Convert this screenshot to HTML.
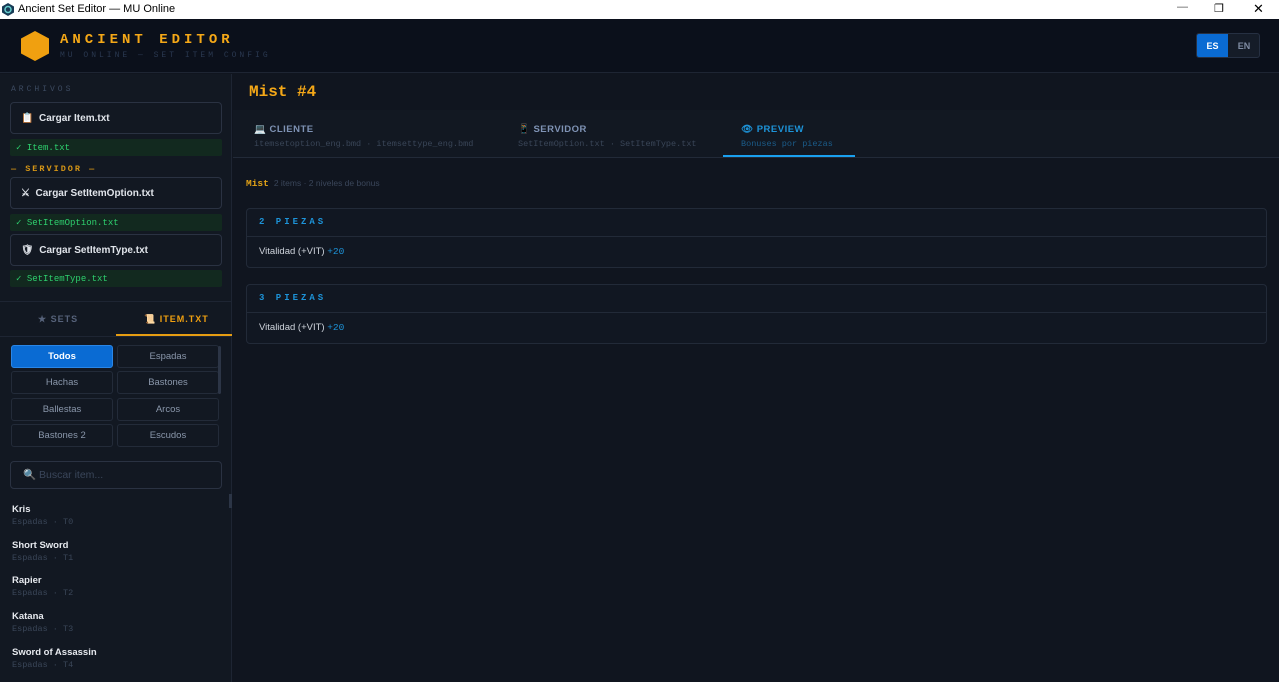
<!DOCTYPE html><html><head><meta charset="utf-8"><style>
*{box-sizing:border-box;margin:0;padding:0}
body{width:1279px;height:682px;overflow:hidden;background:#10151f;font-family:"Liberation Sans",sans-serif;color:#d6dbe4;position:relative}
.mono{font-family:"Liberation Mono",monospace}
.abs{position:absolute}
#tb{left:0;top:0;width:1279px;height:19px;background:#fff;color:#000;font-size:11px}
#hd{left:0;top:19px;width:1279px;height:54px;background:#0b101b;border-bottom:1px solid #1e2533}
#sb{left:0;top:74px;width:232px;height:608px;background:#121822;border-right:1px solid #1e2533}
.btn{position:absolute;left:10px;width:212px;height:32px;border:1px solid #2a3242;border-radius:4px;background:#121822;font-size:10px;font-weight:bold;color:#e0e4ea;padding-left:10px;line-height:32px}
.ok{position:absolute;left:10px;width:212px;height:17px;background:#12291f;color:#2ed06e;font-size:9px;line-height:18px;padding-left:6px;border-radius:2px}
.cat{position:absolute;width:102px;height:23px;border:1px solid #232b39;border-radius:3px;font-size:9.5px;color:#8a97ab;text-align:center;line-height:21px;background:#121822}
.it{position:absolute;left:12px;font-size:9.5px;font-weight:bold;color:#e6e9ee}
.it span{display:block;font-weight:normal;color:#3a4658;font-size:8.5px;margin-top:2px;font-family:"Liberation Mono",monospace}
.card{position:absolute;left:246px;width:1021px;height:60px;border:1px solid #222a38;border-radius:4px;background:#111722}
.card .h{height:28px;border-bottom:1px solid #222a38;color:#1d93d8;font-size:9px;font-weight:bold;letter-spacing:3px;padding-left:12px;line-height:27px;font-family:"Liberation Mono",monospace}
.card .b{font-size:9.5px;padding-left:12px;line-height:30px;color:#cfd4dc}
.card .b b{color:#1d93d8;font-weight:normal;font-family:"Liberation Mono",monospace}
.tab{position:absolute;top:124px;font-size:9.5px;font-weight:bold;letter-spacing:.5px}
.tab span{display:block;font-weight:normal;font-size:8.5px;margin-top:4px;font-family:"Liberation Mono",monospace;letter-spacing:0}
</style></head><body>
<div class="abs" id="tb"><svg class="abs" style="left:2px;top:3px" width="12" height="13" viewBox="0 0 12 13"><polygon points="6,0 12,3.5 12,9.5 6,13 0,9.5 0,3.5" fill="#163a55"/><circle cx="6" cy="6.5" r="3" fill="none" stroke="#6cc" stroke-width="1.5"/></svg><span class="abs" style="left:18px;top:3px">Ancient Set Editor — MU Online</span>
<span class="abs" style="left:1177px;top:1px;color:#555">—</span><span class="abs" style="left:1214px;top:2px;font-size:11px">❐</span><span class="abs" style="left:1253px;top:1px;font-size:13px">✕</span></div>
<div class="abs" id="hd">
<svg class="abs" style="left:19px;top:11px" width="32" height="32" viewBox="0 0 32 32"><polygon points="16,1 30,8.5 30,23.5 16,31 2,23.5 2,8.5" fill="#f0a010"/></svg>
<div class="abs mono" style="left:60px;top:13px;color:#f5a817;font-size:14px;font-weight:bold;letter-spacing:4px">ANCIENT EDITOR</div>
<div class="abs mono" style="left:60px;top:32px;color:#2a3850;font-size:8px;letter-spacing:3px">MU ONLINE — SET ITEM CONFIG</div>
<div class="abs" style="left:1196px;top:14px;width:64px;height:25px;border:1px solid #263042;border-radius:3px;background:#151c28;overflow:hidden;font-size:9px;font-weight:bold"><div class="abs" style="left:0;top:0;width:31px;height:25px;background:#0a6bd3;color:#fff;text-align:center;line-height:24px">ES</div><div class="abs" style="left:31px;top:0;width:32px;color:#7f8ca3;text-align:center;line-height:24px">EN</div></div>
</div>
<div class="abs" id="sb">
<div class="abs mono" style="left:11px;top:11px;font-size:8px;color:#3c4a60;letter-spacing:3px">ARCHIVOS</div>
<div class="btn" style="top:28px">📋 &nbsp;Cargar Item.txt</div>
<div class="ok mono" style="top:65px">✓ Item.txt</div>
<div class="abs mono" style="left:11px;top:90px;font-size:8.5px;color:#d49516;letter-spacing:2px;font-weight:bold">— SERVIDOR —</div>
<div class="btn" style="top:103px">⚔ &nbsp;Cargar SetItemOption.txt</div>
<div class="ok mono" style="top:140px">✓ SetItemOption.txt</div>
<div class="btn" style="top:160px">🛡 &nbsp;Cargar SetItemType.txt</div>
<div class="ok mono" style="top:196px">✓ SetItemType.txt</div>
<div class="abs" style="left:0;top:227px;width:232px;height:1px;background:#1e2533"></div>
<div class="abs" style="left:38px;top:240px;font-size:9px;font-weight:bold;color:#56627a;letter-spacing:1px">★ SETS</div>
<div class="abs" style="left:144px;top:240px;font-size:9px;font-weight:bold;color:#f0a010;letter-spacing:1px">📜 ITEM.TXT</div>
<div class="abs" style="left:116px;top:260px;width:116px;height:2px;background:#e59c12"></div>
<div class="abs" style="left:0;top:262px;width:232px;height:1px;background:#1e2533"></div>
<div class="cat" style="left:11px;top:271px;background:#0a6bd3;border-color:#2a86e6;color:#fff;font-weight:bold">Todos</div>
<div class="cat" style="left:117px;top:271px">Espadas</div>
<div class="cat" style="left:11px;top:297px">Hachas</div><div class="cat" style="left:117px;top:297px">Bastones</div>
<div class="cat" style="left:11px;top:324px">Ballestas</div><div class="cat" style="left:117px;top:324px">Arcos</div>
<div class="cat" style="left:11px;top:350px">Bastones 2</div><div class="cat" style="left:117px;top:350px">Escudos</div>
<div class="abs" style="left:218px;top:272px;width:3px;height:48px;background:#2c3546;border-radius:2px"></div>
<div class="abs" style="left:10px;top:387px;width:212px;height:28px;border:1px solid #2a3242;border-radius:4px;font-size:10.5px;color:#3a465a;line-height:26px;padding-left:12px">🔍 Buscar item...</div>
<div class="abs" style="left:229px;top:420px;width:3px;height:14px;background:#2c3546"></div>
<div class="it" style="top:430px">Kris<span>Espadas · T0</span></div>
<div class="it" style="top:466px">Short Sword<span>Espadas · T1</span></div>
<div class="it" style="top:501px">Rapier<span>Espadas · T2</span></div>
<div class="it" style="top:537px">Katana<span>Espadas · T3</span></div>
<div class="it" style="top:573px">Sword of Assassin<span>Espadas · T4</span></div>
</div>
<div class="abs mono" style="left:249px;top:83px;font-size:16px;font-weight:bold;color:#f5a817">Mist #4</div>
<div class="abs" style="left:233px;top:110px;width:1046px;height:48px;background:#121822;border-bottom:1px solid #222a38"></div>
<div class="tab" style="left:254px;color:#7f93b5">💻 CLIENTE<span style="color:#3a4658">itemsetoption_eng.bmd · itemsettype_eng.bmd</span></div>
<div class="tab" style="left:518px;color:#7f93b5">📱 SERVIDOR<span style="color:#3a4658">SetItemOption.txt · SetItemType.txt</span></div>
<div class="tab" style="left:741px;color:#1d93d8">👁 PREVIEW<span style="color:#1b5c8a">Bonuses por piezas</span></div>
<div class="abs" style="left:723px;top:155px;width:132px;height:2px;background:#1aa0ef"></div>
<div class="abs" style="left:246px;top:178px;font-size:9.5px"><b class="mono" style="color:#e3a317">Mist</b> <span style="color:#3a465a;font-size:8.5px">&nbsp;2 items · 2 niveles de bonus</span></div>
<div class="card" style="top:208px"><div class="h">2 PIEZAS</div><div class="b">Vitalidad (+VIT) <b>+20</b></div></div>
<div class="card" style="top:284px"><div class="h">3 PIEZAS</div><div class="b">Vitalidad (+VIT) <b>+20</b></div></div>
</body></html>
